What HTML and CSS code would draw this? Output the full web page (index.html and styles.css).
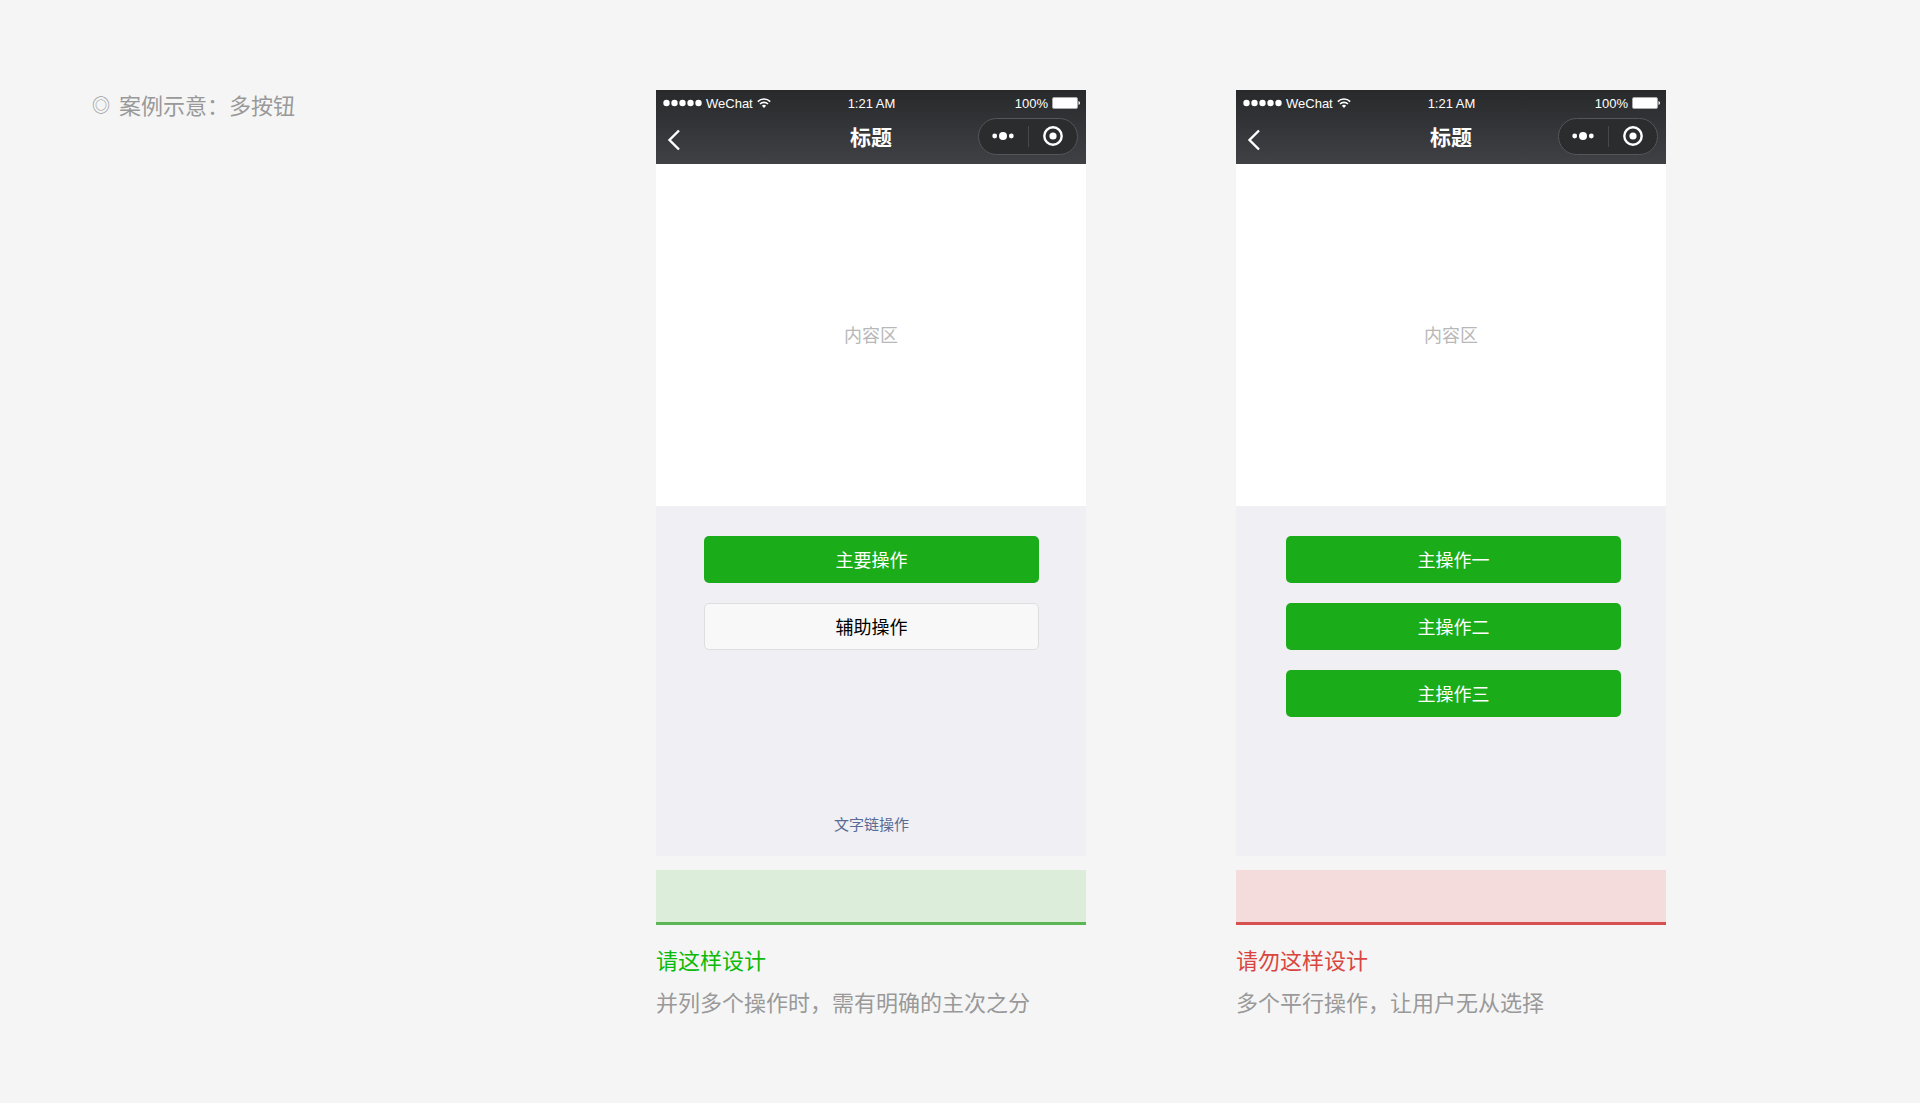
FILE: index.html
```
<!DOCTYPE html>
<html lang="zh-CN">
<head>
    <meta charset="UTF-8">
    <meta name="viewport" content="width=device-width, initial-scale=1.0">
    <title>案例示意：多按钮</title>
    <link rel="stylesheet" href="styles.css">
</head>
<body>

    <!-- Ícones usados nos dois celulares -->
    <svg class="sprite" aria-hidden="true">
        <symbol id="signal" viewBox="0 0 39 8">
            <g fill="#fff">
                <circle cx="3.5" cy="4" r="3.2"/>
                <circle cx="11.5" cy="4" r="3.2"/>
                <circle cx="19.5" cy="4" r="3.2"/>
                <circle cx="27.5" cy="4" r="3.2"/>
                <circle cx="35.5" cy="4" r="3.2"/>
            </g>
        </symbol>
        <symbol id="wifi" viewBox="0 0 14 10">
            <g fill="none" stroke="#fff" stroke-width="1.6">
                <path d="M.8 3.6a8.8 8.8 0 0 1 12.4 0"/>
                <path d="M3 6a5.7 5.7 0 0 1 8 0"/>
            </g>
            <path d="M4.9 7.8a3 3 0 0 1 4.2 0L7 10z" fill="#fff"/>
        </symbol>
        <symbol id="battery" viewBox="0 0 28 12">
            <rect x=".5" y=".5" width="25" height="11" rx="1.5" fill="#fff" stroke="#aaa"/>
            <path d="M26.5 4v4q1.5-.6 1.5-2t-1.5-2z" fill="#fff"/>
        </symbol>
        <symbol id="back" viewBox="0 0 14 22">
            <path d="M12 1.5 2.5 11l9.5 9.5" fill="none" stroke="#fff" stroke-width="2.4"/>
        </symbol>
        <symbol id="more" viewBox="0 0 22 8">
            <g fill="#fff">
                <circle cx="2.7" cy="4" r="2.4"/>
                <circle cx="11" cy="4" r="4"/>
                <circle cx="19.3" cy="4" r="2.4"/>
            </g>
        </symbol>
        <symbol id="target" viewBox="0 0 20 20">
            <circle cx="10" cy="10" r="8.7" fill="none" stroke="#fff" stroke-width="2.4"/>
            <circle cx="10" cy="10" r="3.6" fill="#fff"/>
        </symbol>
    </svg>

    <main class="page">
        <h1 class="page-title"><span class="mark">◎</span>案例示意：多按钮</h1>

        <section class="example good">
            <div class="phone">
                <header class="phone-header">
                    <div class="status-bar">
                        <div class="carrier">
                            <svg class="icon-signal"><use href="#signal"/></svg>
                            <span>WeChat</span>
                            <svg class="icon-wifi"><use href="#wifi"/></svg>
                        </div>
                        <span class="time">1:21 AM</span>
                        <div class="power">
                            <span>100%</span>
                            <svg class="icon-battery"><use href="#battery"/></svg>
                        </div>
                    </div>
                    <div class="nav-bar">
                        <button type="button" class="back" aria-label="返回"><svg class="icon-back"><use href="#back"/></svg></button>
                        <span class="nav-title">标题</span>
                        <div class="capsule">
                            <button type="button" aria-label="更多"><svg class="icon-more"><use href="#more"/></svg></button>
                            <button type="button" aria-label="关闭"><svg class="icon-target"><use href="#target"/></svg></button>
                        </div>
                    </div>
                </header>
                <div class="content">内容区</div>
                <div class="actions">
                    <button type="button" class="btn btn-primary">主要操作</button>
                    <button type="button" class="btn btn-default">辅助操作</button>
                    <a href="#" class="text-link">文字链操作</a>
                </div>
            </div>
            <div class="band"></div>
            <h2>请这样设计</h2>
            <p>并列多个操作时，需有明确的主次之分</p>
        </section>

        <section class="example bad">
            <div class="phone">
                <header class="phone-header">
                    <div class="status-bar">
                        <div class="carrier">
                            <svg class="icon-signal"><use href="#signal"/></svg>
                            <span>WeChat</span>
                            <svg class="icon-wifi"><use href="#wifi"/></svg>
                        </div>
                        <span class="time">1:21 AM</span>
                        <div class="power">
                            <span>100%</span>
                            <svg class="icon-battery"><use href="#battery"/></svg>
                        </div>
                    </div>
                    <div class="nav-bar">
                        <button type="button" class="back" aria-label="返回"><svg class="icon-back"><use href="#back"/></svg></button>
                        <span class="nav-title">标题</span>
                        <div class="capsule">
                            <button type="button" aria-label="更多"><svg class="icon-more"><use href="#more"/></svg></button>
                            <button type="button" aria-label="关闭"><svg class="icon-target"><use href="#target"/></svg></button>
                        </div>
                    </div>
                </header>
                <div class="content">内容区</div>
                <div class="actions">
                    <button type="button" class="btn btn-primary">主操作一</button>
                    <button type="button" class="btn btn-primary">主操作二</button>
                    <button type="button" class="btn btn-primary">主操作三</button>
                </div>
            </div>
            <div class="band"></div>
            <h2>请勿这样设计</h2>
            <p>多个平行操作，让用户无从选择</p>
        </section>
    </main>

</body>
</html>
```
FILE: styles.css
```
* { box-sizing: border-box; }
body { margin: 0; background: #f5f5f5; color: #999; font-family: "Noto Sans CJK SC", sans-serif; font-weight: 400; }
h1, h2, p { margin: 0; font-size: 22px; font-weight: 400; line-height: 28px; }
button { margin: 0; padding: 0; border: none; background: none; font-family: inherit; cursor: pointer; }
svg { display: block; }
.sprite { position: absolute; width: 0; height: 0; }

.page { display: grid; grid-template-columns: 1fr minmax(0, 430px) minmax(0, 430px); align-items: start; column-gap: 150px; padding: 90px 254px 80px 92px; }
.page-title { display: flex; align-items: center; gap: 9px; white-space: nowrap; }
.mark { font-size: 18px; }

/* Cabeçalho do celular */
.phone-header { height: 74px; background: linear-gradient(#28292b, #404145); color: #fff; }
.status-bar { display: grid; grid-template-columns: 1fr auto 1fr; align-items: center; height: 26px; padding: 0 6px 0 7px; font-family: "Liberation Sans", Arial, sans-serif; font-size: 13px; }
.carrier, .power { display: flex; align-items: center; gap: 4px; }
.power { justify-content: flex-end; }
.icon-signal { width: 39px; height: 8px; }
.icon-wifi { width: 14px; height: 10px; }
.icon-battery { width: 28px; height: 12px; }

.nav-bar { display: grid; grid-template-columns: 1fr auto 1fr; align-items: center; height: 40px; padding: 0 8px; }
.back { justify-self: start; padding: 8px 0 0 3px; }
.icon-back { width: 14px; height: 22px; }
.nav-title { font-size: 21px; font-weight: 700; line-height: 30px; }
.capsule { display: flex; justify-self: end; align-items: center; width: 100px; height: 37px; border: 1px solid #55565a; border-radius: 19px; background: #2b2c2e; }
.capsule button { display: flex; flex: 1; align-items: center; justify-content: center; height: 21px; }
.capsule button + button { border-left: 1px solid #47484b; }
.icon-more { width: 22px; height: 8px; }
.icon-target { width: 20px; height: 20px; }

.content { display: flex; align-items: center; justify-content: center; height: 342px; padding-bottom: 2px; background: #fff; color: #b8b8b8; font-size: 18px; }

.actions { display: flex; flex-direction: column; gap: 20px; height: 350px; padding: 30px 47px 20px 48px; background: #efeff4; }
.bad .actions { padding: 30px 45px 20px 50px; }
.btn { height: 47px; padding-bottom: 2px; border-radius: 5px; font-size: 18px; }
.btn-primary { background: #1aad19; color: #fff; }
.btn-default { border: 1px solid #dedee0; background: #f8f8f8; color: #000; }
.text-link { align-self: center; margin-top: auto; color: #576b95; font-size: 15px; line-height: 24px; text-decoration: none; }

/* Faixa e legenda */
.band { height: 55px; margin-top: 14px; border-bottom: 3px solid; }
.good .band { border-color: #5bb653; background: #dceeda; }
.bad .band { border-color: #d5504e; background: #f4dcdc; }
.example h2 { margin-top: 20px; }
.example p { margin-top: 14px; }
.good h2 { color: #09bb07; }
.bad h2 { color: #d94642; }
```
